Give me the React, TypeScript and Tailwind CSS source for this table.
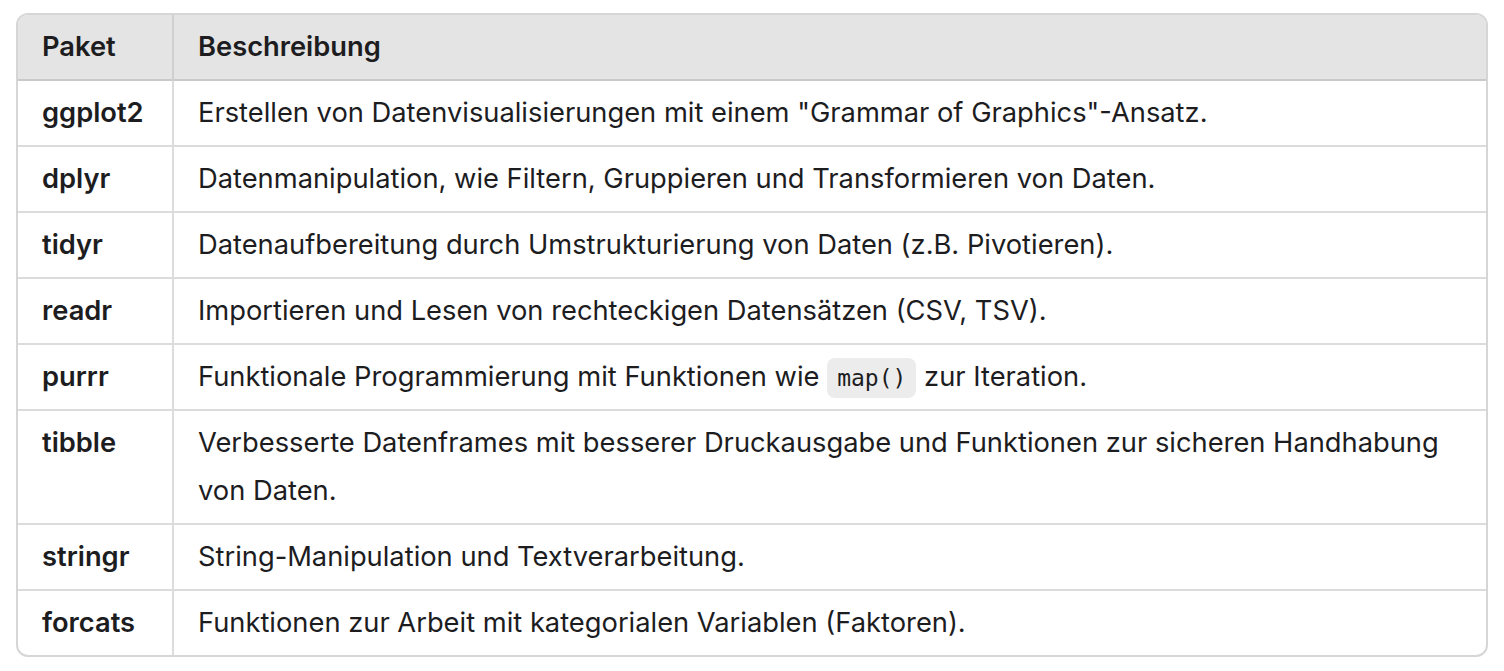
const rows: { pkg: string; desc: React.ReactNode }[] = [
  { pkg: "ggplot2", desc: 'Erstellen von Datenvisualisierungen mit einem "Grammar of Graphics"-Ansatz.' },
  { pkg: "dplyr", desc: "Datenmanipulation, wie Filtern, Gruppieren und Transformieren von Daten." },
  { pkg: "tidyr", desc: "Datenaufbereitung durch Umstrukturierung von Daten (z.B. Pivotieren)." },
  { pkg: "readr", desc: "Importieren und Lesen von rechteckigen Datensätzen (CSV, TSV)." },
  {
    pkg: "purrr",
    desc: (
      <>
        Funktionale Programmierung mit Funktionen wie{" "}
        <code className="rounded-lg bg-[#ececec] px-[10px] py-[7px] font-['DejaVu_Sans_Mono',monospace] text-[23px] leading-none">map()</code>{" "}
        zur Iteration.
      </>
    ),
  },
  {
    pkg: "tibble",
    desc: "Verbesserte Datenframes mit besserer Druckausgabe und Funktionen zur sicheren Handhabung von Daten.",
  },
  { pkg: "stringr", desc: "String-Manipulation und Textverarbeitung." },
  { pkg: "forcats", desc: "Funktionen zur Arbeit mit kategorialen Variablen (Faktoren)." },
];

export default function App() {
  return (
    <div className="min-h-screen bg-white pl-4 pr-4 pt-[13px] font-['Inter',sans-serif] text-[27.3px] leading-[48px] text-[#1d1d1f]">
      <div className="overflow-hidden rounded-xl border-2 border-[#d6d6d6]">
        <table className="w-full border-collapse text-left">
          <thead>
            <tr className="border-b-2 border-[#c9c9c9] bg-[#e4e4e4]">
              <th className="w-[155px] border-r-2 border-[#cfcfcf] px-6 py-2 font-semibold">Paket</th>
              <th className="px-6 py-2 font-semibold">Beschreibung</th>
            </tr>
          </thead>
          <tbody>
            {rows.map((r, i) => (
              <tr key={r.pkg} className={i < rows.length - 1 ? "border-b-2 border-[#dcdcdc]" : ""}>
                <td className="border-r-2 border-[#dcdcdc] px-6 py-2 align-top font-semibold">{r.pkg}</td>
                <td className="px-6 py-2 align-top">{r.desc}</td>
              </tr>
            ))}
          </tbody>
        </table>
      </div>
    </div>
  );
}
